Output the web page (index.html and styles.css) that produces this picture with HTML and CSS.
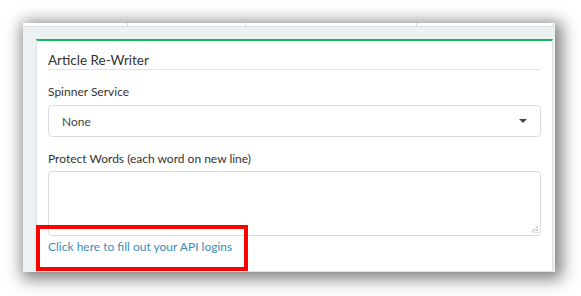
FILE: index.html
```html
<!DOCTYPE html>
<html>
<head>
<meta charset="utf-8">
<link rel="stylesheet" href="styles.css">
</head>
<body>
<div class="stage">
  <div class="window">
    <div class="tabs">
      <div class="tab t1"></div>
      <div class="tab t2"></div>
      <div class="tab t3"></div>
      <div class="tab t4"></div>
    </div>
    <div class="panel">
      <h3 class="panel-title">Article Re-Writer</h3>
      <label class="field-label">Spinner Service</label>
      <div class="select">
        <span>None</span>
        <span class="caret"></span>
      </div>
      <label class="field-label second">Protect Words (each word on new line)</label>
      <div class="textarea">
        <svg class="grip" width="9" height="9" viewBox="0 0 9 9"><path d="M8 1L1 8M8 4L4 8M8 7L7 8" stroke="#777" stroke-width="1" stroke-dasharray="1 1" fill="none"/></svg>
      </div>
      <a class="api-link" href="#">Click here to fill out your API logins</a>
    </div>
    <div class="highlight"></div>
  </div>
</div>
</body>
</html>
```
FILE: styles.css
```css
html, body {
  margin: 0;
  padding: 0;
  background: #ffffff;
  width: 581px;
  height: 296px;
  overflow: hidden;
}
.stage {
  padding: 23px 0 0 23px;
}
.window {
  position: relative;
  width: 532px;
  height: 249px;
  background: #eef1f2;
  box-shadow: 3px 3px 15px 4px rgba(0, 0, 0, 0.5);
  display: flex;
  flex-direction: column;
}
.tabs {
  height: 3px;
  display: flex;
  border-bottom: 1px solid #dcdfe1;
  margin-right: 1px;
}
.tab {
  background: #fff;
  border-right: 1px solid #d6d9db;
}
.t1 { width: 104px; }
.t2 { width: 117px; }
.t3 { width: 170px; }
.t4 { flex: 1; border-radius: 0 0 4px 0; }
.panel {
  margin: 12px 2px 0 13px;
  flex: 1;
  background: #fff;
  border-top: 2px solid #13b85d;
  border-left: 1px solid #dde1e3;
  border-right: 1px solid #dde1e3;
  border-bottom: 1px solid #dde1e3;
  padding: 0 11px;
  display: flex;
  flex-direction: column;
  font-family: Lato, "Open Sans", sans-serif;
  color: #333;
}
.panel-title {
  margin: 0;
  font-size: 13.5px;
  font-weight: 400;
  line-height: 18px;
  padding: 10px 0 0;
  border-bottom: 1px solid #e3e3e3;
}
.field-label {
  display: block;
  font-size: 12px;
  font-weight: 400;
  line-height: 15px;
  margin-top: 14px;
  margin-bottom: 6px;
}
.field-label.second {
  margin-top: 14px;
  margin-bottom: 5px;
}
.select {
  height: 30px;
  border: 1px solid #dcdcdc;
  border-radius: 4px;
  display: flex;
  align-items: center;
  justify-content: space-between;
  padding: 0 13px 0 13px;
  font-size: 12px;
  color: #444;
}
.caret {
  width: 0;
  height: 0;
  border-left: 4px solid transparent;
  border-right: 4px solid transparent;
  border-top: 4px solid #444;
}
.textarea {
  position: relative;
  height: 63px;
  border: 1px solid #dcdcdc;
  border-radius: 4px;
}
.grip {
  position: absolute;
  right: 1px;
  bottom: 1px;
}
.api-link {
  font-size: 12px;
  color: #3c8dbc;
  text-decoration: none;
  margin-top: 3px;
  line-height: 16px;
}
.highlight {
  position: absolute;
  left: 13px;
  top: 202px;
  width: 204px;
  height: 38px;
  border: 4px solid #ff0000;
}
```
